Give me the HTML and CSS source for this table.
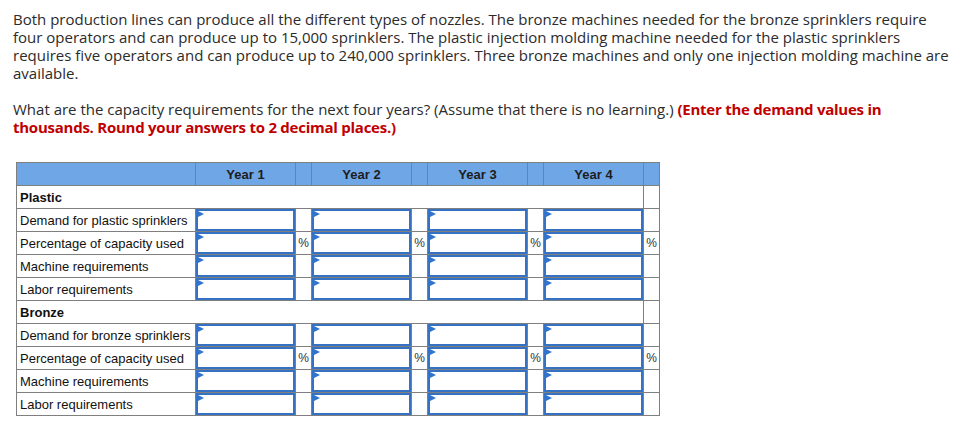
FILE: index.html
```html
<!DOCTYPE html>
<html>
<head>
<meta charset="utf-8">
<link rel="stylesheet" href="styles.css">
</head>
<body>
<div class="page">
  <p class="para">Both production lines can produce all the different types of nozzles. The bronze machines needed for the bronze sprinklers require four operators and can produce up to 15,000 sprinklers. The plastic injection molding machine needed for the plastic sprinklers requires five operators and can produce up to 240,000 sprinklers. Three bronze machines and only one injection molding machine are available.</p>
  <p class="para q">What are the capacity requirements for the next four years? (Assume that there is no learning.) <strong class="red">(Enter the demand values in thousands. Round your answers to 2 decimal places.)</strong></p>

  <table class="grid">
    <colgroup>
      <col class="c-label"><col class="c-in"><col class="c-pct"><col class="c-in"><col class="c-pct"><col class="c-in"><col class="c-pct"><col class="c-in"><col class="c-pct">
    </colgroup>
    <thead>
      <tr class="head">
        <th></th><th>Year 1</th><th></th><th>Year 2</th><th></th><th>Year 3</th><th></th><th>Year 4</th><th></th>
      </tr>
    </thead>
    <tbody>
      <tr><td class="sect" colspan="8">Plastic</td><td></td></tr>
      <tr><td class="lbl">Demand for plastic sprinklers</td>
        <td class="inp"><div class="box"><input type="text"><span class="flag"></span></div></td><td class="pct"></td>
        <td class="inp"><div class="box"><input type="text"><span class="flag"></span></div></td><td class="pct"></td>
        <td class="inp"><div class="box"><input type="text"><span class="flag"></span></div></td><td class="pct"></td>
        <td class="inp"><div class="box"><input type="text"><span class="flag"></span></div></td><td class="pct"></td></tr>
      <tr><td class="lbl">Percentage of capacity used</td>
        <td class="inp"><div class="box"><input type="text"><span class="flag"></span></div></td><td class="pct">%</td>
        <td class="inp"><div class="box"><input type="text"><span class="flag"></span></div></td><td class="pct">%</td>
        <td class="inp"><div class="box"><input type="text"><span class="flag"></span></div></td><td class="pct">%</td>
        <td class="inp"><div class="box"><input type="text"><span class="flag"></span></div></td><td class="pct">%</td></tr>
      <tr><td class="lbl">Machine requirements</td>
        <td class="inp"><div class="box"><input type="text"><span class="flag"></span></div></td><td class="pct"></td>
        <td class="inp"><div class="box"><input type="text"><span class="flag"></span></div></td><td class="pct"></td>
        <td class="inp"><div class="box"><input type="text"><span class="flag"></span></div></td><td class="pct"></td>
        <td class="inp"><div class="box"><input type="text"><span class="flag"></span></div></td><td class="pct"></td></tr>
      <tr><td class="lbl">Labor requirements</td>
        <td class="inp"><div class="box"><input type="text"><span class="flag"></span></div></td><td class="pct"></td>
        <td class="inp"><div class="box"><input type="text"><span class="flag"></span></div></td><td class="pct"></td>
        <td class="inp"><div class="box"><input type="text"><span class="flag"></span></div></td><td class="pct"></td>
        <td class="inp"><div class="box"><input type="text"><span class="flag"></span></div></td><td class="pct"></td></tr>
      <tr><td class="sect" colspan="8">Bronze</td><td></td></tr>
      <tr><td class="lbl">Demand for bronze sprinklers</td>
        <td class="inp"><div class="box"><input type="text"><span class="flag"></span></div></td><td class="pct"></td>
        <td class="inp"><div class="box"><input type="text"><span class="flag"></span></div></td><td class="pct"></td>
        <td class="inp"><div class="box"><input type="text"><span class="flag"></span></div></td><td class="pct"></td>
        <td class="inp"><div class="box"><input type="text"><span class="flag"></span></div></td><td class="pct"></td></tr>
      <tr><td class="lbl">Percentage of capacity used</td>
        <td class="inp"><div class="box"><input type="text"><span class="flag"></span></div></td><td class="pct">%</td>
        <td class="inp"><div class="box"><input type="text"><span class="flag"></span></div></td><td class="pct">%</td>
        <td class="inp"><div class="box"><input type="text"><span class="flag"></span></div></td><td class="pct">%</td>
        <td class="inp"><div class="box"><input type="text"><span class="flag"></span></div></td><td class="pct">%</td></tr>
      <tr><td class="lbl">Machine requirements</td>
        <td class="inp"><div class="box"><input type="text"><span class="flag"></span></div></td><td class="pct"></td>
        <td class="inp"><div class="box"><input type="text"><span class="flag"></span></div></td><td class="pct"></td>
        <td class="inp"><div class="box"><input type="text"><span class="flag"></span></div></td><td class="pct"></td>
        <td class="inp"><div class="box"><input type="text"><span class="flag"></span></div></td><td class="pct"></td></tr>
      <tr><td class="lbl">Labor requirements</td>
        <td class="inp"><div class="box"><input type="text"><span class="flag"></span></div></td><td class="pct"></td>
        <td class="inp"><div class="box"><input type="text"><span class="flag"></span></div></td><td class="pct"></td>
        <td class="inp"><div class="box"><input type="text"><span class="flag"></span></div></td><td class="pct"></td>
        <td class="inp"><div class="box"><input type="text"><span class="flag"></span></div></td><td class="pct"></td></tr>
    </tbody>
  </table>
</div>
</body>
</html>
```

FILE: styles.css
```css
html, body {
  margin: 0;
  padding: 0;
  background: #fff;
}
.page {
  padding: 10px 8px 0 13px;
  font-family: "Open Sans", "Liberation Sans", sans-serif;
  color: #2b2b2b;
}
.para {
  margin: 0 0 18px 0;
  font-size: 15px;
  line-height: 18px;
}
.para.q {
  margin-bottom: 26px;
}
.red {
  color: #c00000;
  font-weight: 700;
  letter-spacing: -0.25px;
}
.grid {
  margin-left: 3px;
  border-collapse: collapse;
  table-layout: fixed;
  width: 644px;
  font-family: "Liberation Sans", Arial, sans-serif;
  font-size: 13px;
  color: #111;
}
.c-label { width: 179px; }
.c-in { width: 100px; }
.c-pct { width: 16px; }
.grid th, .grid td {
  border: 1px solid #7f7f7f;
  height: 22px;
  padding: 0;
}
.head th {
  background: #6fa6e6;
  font-weight: 700;
  text-align: center;
  color: #1d1d1d;
}
.sect {
  font-weight: 700;
  padding-left: 3px !important;
}
.lbl {
  padding-left: 3px !important;
  white-space: nowrap;
  overflow: hidden;
}
.pct {
  text-align: center;
  font-size: 12px;
  color: #333;
}
.inp {
  vertical-align: top;
}
.box {
  position: relative;
  height: 22px;
}
.box input {
  display: block;
  box-sizing: border-box;
  width: 100%;
  height: 22px;
  margin: 0;
  padding: 0 4px;
  border: 2px solid #3572c3;
  background: #fff;
  outline: none;
}
.flag {
  position: absolute;
  left: 2px;
  top: 2px;
  width: 0;
  height: 0;
  border-top: 3px solid transparent;
  border-bottom: 3px solid transparent;
  border-left: 6px solid #2f74d0;
}
```
